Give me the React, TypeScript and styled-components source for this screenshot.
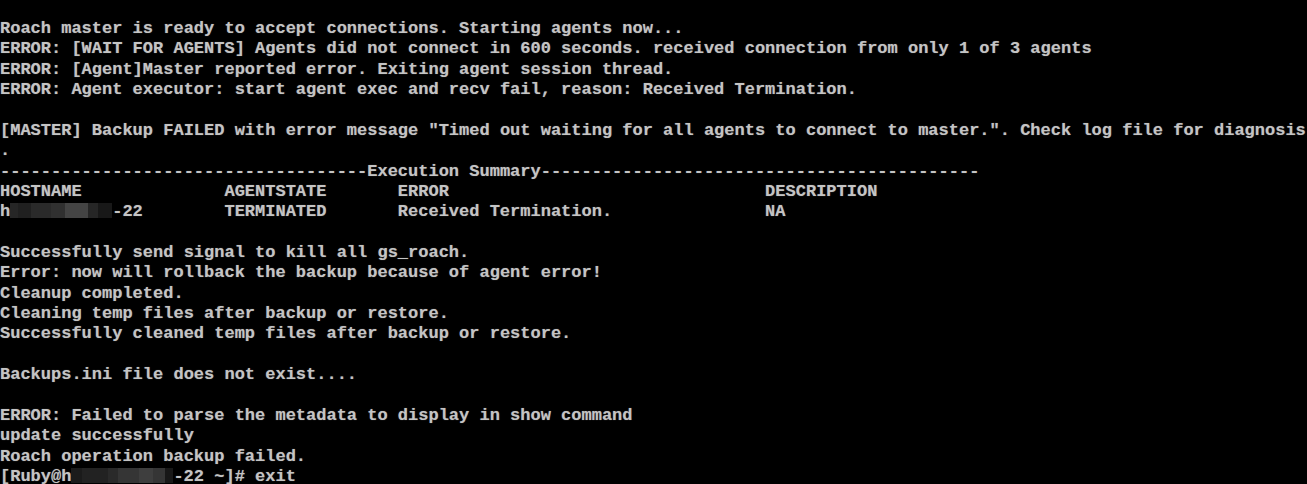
import React from 'react'
import styled, { createGlobalStyle } from 'styled-components'

const CELL = 10.2
const ROW = 20.36

const Global = createGlobalStyle`
  html, body {
    margin: 0;
    padding: 0;
    background: #000;
  }
`

const Screen = styled.div`
  width: 1307px;
  height: 484px;
  overflow: hidden;
  background: #000;
  padding-top: 19px;
  box-sizing: border-box;
  color: #c4c4c4;
  font-family: "Liberation Mono", "DejaVu Sans Mono", monospace;
  font-weight: bold;
  font-size: 17px;
  letter-spacing: 0;
`

const Line = styled.div`
  height: ${ROW}px;
  line-height: ${ROW}px;
  white-space: pre;
  text-shadow: 0 0 1px rgba(210, 210, 210, 0.5);
`

const Redact = styled.span<{ $cols: number }>`
  display: inline-flex;
  width: ${(p) => p.$cols * CELL}px;
  height: 15px;
  vertical-align: -2px;
  filter: blur(0.6px);
`

const Patch = styled.span<{ $grow: number; $shade: string }>`
  flex: ${(p) => p.$grow};
  background: ${(p) => p.$shade};
`

type Seg = [number, string]

const topMask: Seg[] = [
  [8, '#262626'],
  [12, '#202020'],
  [20, '#2a2a2a'],
  [14, '#303030'],
  [22, '#444'],
  [10, '#262626'],
  [14, '#181818'],
]

const bottomMask: Seg[] = [
  [10, '#1b1b1b'],
  [26, '#222'],
  [10, '#2a2a2a'],
  [20, '#353535'],
  [14, '#3e3e3e'],
  [12, '#353535'],
  [8, '#181818'],
]

const Mask = ({ cols, segs }: { cols: number; segs: Seg[] }) => (
  <Redact $cols={cols}>
    {segs.map(([g, c], i) => (
      <Patch key={i} $grow={g} $shade={c} />
    ))}
  </Redact>
)

const pad = (s: string, n: number) => s + ' '.repeat(Math.max(0, n - s.length))

const dashes =
  '-'.repeat(36) + 'Execution Summary' + '-'.repeat(43)

const header =
  pad('HOSTNAME', 22) + pad('AGENTSTATE', 17) + pad('ERROR', 36) + 'DESCRIPTION'

const rowTail =
  pad('', 8) + pad('TERMINATED', 17) + pad('Received Termination.', 36) + 'NA'

const App = () => {
  return (
    <>
      <Global />
      <Screen>
        <Line>Roach master is ready to accept connections. Starting agents now...</Line>
        <Line>ERROR: [WAIT FOR AGENTS] Agents did not connect in 600 seconds. received connection from only 1 of 3 agents</Line>
        <Line>ERROR: [Agent]Master reported error. Exiting agent session thread.</Line>
        <Line>ERROR: Agent executor: start agent exec and recv fail, reason: Received Termination.</Line>
        <Line />
        <Line>[MASTER] Backup FAILED with error message "Timed out waiting for all agents to connect to master.". Check log file for diagnosis</Line>
        <Line>.</Line>
        <Line>{dashes}</Line>
        <Line>{header}</Line>
        <Line>
          h<Mask cols={10} segs={topMask} />-22{rowTail}
        </Line>
        <Line />
        <Line>Successfully send signal to kill all gs_roach.</Line>
        <Line>Error: now will rollback the backup because of agent error!</Line>
        <Line>Cleanup completed.</Line>
        <Line>Cleaning temp files after backup or restore.</Line>
        <Line>Successfully cleaned temp files after backup or restore.</Line>
        <Line />
        <Line>Backups.ini file does not exist....</Line>
        <Line />
        <Line>ERROR: Failed to parse the metadata to display in show command</Line>
        <Line>update successfully</Line>
        <Line>Roach operation backup failed.</Line>
        <Line>
          [Ruby@h<Mask cols={10} segs={bottomMask} />-22 ~]# exit
        </Line>
      </Screen>
    </>
  )
}

export default App
